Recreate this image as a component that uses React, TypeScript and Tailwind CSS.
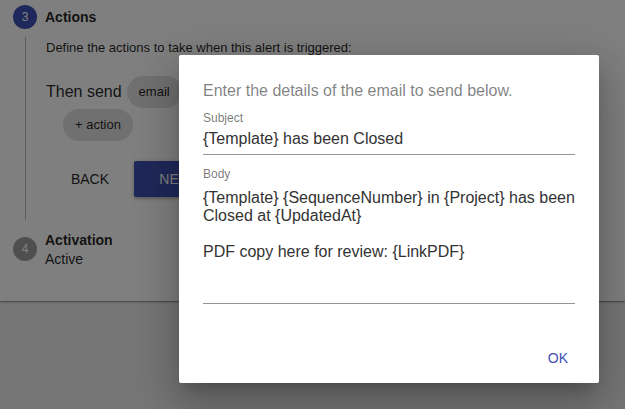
export default function App() {
  return (
    <div className="relative w-[625px] h-[409px] overflow-hidden bg-[#ececec] font-['Liberation_Sans',Arial,sans-serif]">
      {/* Page paper with stepper */}
      <div className="h-[301px] bg-white shadow-[0px_1px_3px_0px_rgba(0,0,0,0.2),0px_1px_1px_0px_rgba(0,0,0,0.14),0px_2px_1px_-1px_rgba(0,0,0,0.12)] pl-[13px] pt-[5px]">
        {/* Step 3 */}
        <div className="flex items-center h-[24px]">
          <div className="w-[24px] h-[24px] rounded-full bg-[#3f51b5] text-white text-[12px] flex items-center justify-center">3</div>
          <div className="ml-[8px] text-[14px] font-bold text-[rgba(0,0,0,0.87)]">Actions</div>
        </div>
        <div className="flex">
          <div className="w-[24px] flex justify-center pt-[8px]">
            <div className="w-px h-[183px] bg-[#bdbdbd]"></div>
          </div>
          <div className="ml-[9px] pt-[11px] text-[rgba(0,0,0,0.87)]">
            <div className="text-[13px] leading-[16px]">Define the actions to take when this alert is triggered:</div>
            <div className="flex items-center mt-[20px] h-[32px]">
              <span className="text-[16px]">Then send</span>
              <span className="ml-[5px] h-[32px] rounded-full bg-[#e0e0e0] px-[12px] flex items-center text-[13px]">email</span>
            </div>
            <div className="mt-px ml-[17px] h-[32px] w-[70px] rounded-full bg-[#e0e0e0] flex items-center justify-center text-[13px]">+ action</div>
            <div className="flex mt-[20px]">
              <div className="w-[88px] h-[36px] flex items-center justify-center text-[14px] font-medium">BACK</div>
              <div className="w-[88px] h-[36px] rounded-[2px] bg-[#3f51b5] text-white flex items-center justify-center text-[14px] font-medium shadow-[0px_1px_5px_0px_rgba(0,0,0,0.2),0px_2px_2px_0px_rgba(0,0,0,0.14)]">NEXT</div>
            </div>
          </div>
        </div>
        {/* Step 4 */}
        <div className="flex items-start mt-[16px]">
          <div className="mt-[1px] w-[24px] h-[24px] rounded-full bg-[#9e9e9e] text-white text-[12px] flex items-center justify-center">4</div>
          <div className="ml-[8px] text-[rgba(0,0,0,0.87)]">
            <div className="text-[14px] font-bold leading-[16px] -mt-[4px]">Activation</div>
            <div className="text-[14px] leading-[16px] mt-[3px]">Active</div>
          </div>
        </div>
      </div>

      {/* Backdrop */}
      <div className="absolute inset-0 bg-black/50"></div>

      {/* Dialog */}
      <div className="absolute left-[179px] top-[55px] w-[420px] h-[328px] bg-white rounded-[2px] shadow-[0px_11px_15px_-7px_rgba(0,0,0,0.2),0px_24px_38px_3px_rgba(0,0,0,0.14),0px_9px_46px_8px_rgba(0,0,0,0.12)] px-[24px] flex flex-col">
        <div className="pt-[26px] text-[16px] leading-[19px] text-[rgba(0,0,0,0.5)]">Enter the details of the email to send below.</div>
        <div className="mt-[11px] text-[12px] leading-[14px] text-[rgba(0,0,0,0.54)]">Subject</div>
        <div className="mt-[4px] text-[16px] leading-[19px] text-[#333] pb-[6px] border-b border-[rgba(0,0,0,0.42)]">{"{Template} has been Closed"}</div>
        <div className="mt-[12px] text-[12px] leading-[14px] text-[rgba(0,0,0,0.54)]">Body</div>
        <div className="mt-[8px] h-[114px] text-[16px] leading-[18px] text-[#333]">
          <div>{"{Template} {SequenceNumber} in {Project} has been"}</div>
          <div>{"Closed at {UpdatedAt}"}</div>
          <div className="h-[18px]"></div>
          <div>{"PDF copy here for review: {LinkPDF}"}</div>
        </div>
        <div className="border-b border-[rgba(0,0,0,0.42)]"></div>
        <div className="flex justify-end mt-[46px]">
          <div className="text-[14px] leading-[16px] text-[#3f51b5] pr-[7px]">OK</div>
        </div>
      </div>
    </div>
  );
}
